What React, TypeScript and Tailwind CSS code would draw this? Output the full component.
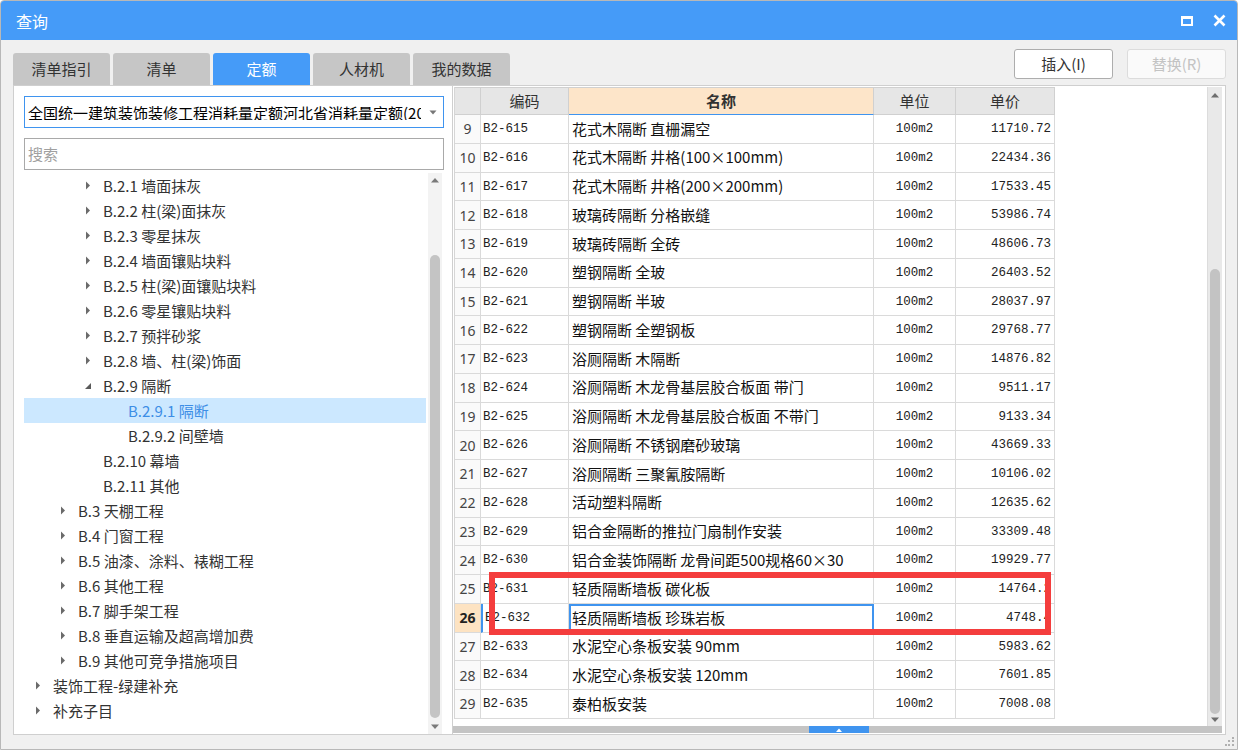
import React from "react";

type TreeItem = { l: 1 | 2 | 3 | 4; t: string; a?: "c" | "e"; sel?: boolean };

const tree: TreeItem[] = [
  { l: 3, t: "B.2.1 墙面抹灰", a: "c" },
  { l: 3, t: "B.2.2 柱(梁)面抹灰", a: "c" },
  { l: 3, t: "B.2.3 零星抹灰", a: "c" },
  { l: 3, t: "B.2.4 墙面镶贴块料", a: "c" },
  { l: 3, t: "B.2.5 柱(梁)面镶贴块料", a: "c" },
  { l: 3, t: "B.2.6 零星镶贴块料", a: "c" },
  { l: 3, t: "B.2.7 预拌砂浆", a: "c" },
  { l: 3, t: "B.2.8 墙、柱(梁)饰面", a: "c" },
  { l: 3, t: "B.2.9 隔断", a: "e" },
  { l: 4, t: "B.2.9.1 隔断", sel: true },
  { l: 4, t: "B.2.9.2 间壁墙" },
  { l: 3, t: "B.2.10 幕墙" },
  { l: 3, t: "B.2.11 其他" },
  { l: 2, t: "B.3 天棚工程", a: "c" },
  { l: 2, t: "B.4 门窗工程", a: "c" },
  { l: 2, t: "B.5 油漆、涂料、裱糊工程", a: "c" },
  { l: 2, t: "B.6 其他工程", a: "c" },
  { l: 2, t: "B.7 脚手架工程", a: "c" },
  { l: 2, t: "B.8 垂直运输及超高增加费", a: "c" },
  { l: 2, t: "B.9 其他可竞争措施项目", a: "c" },
  { l: 1, t: "装饰工程-绿建补充", a: "c" },
  { l: 1, t: "补充子目", a: "c" },
];

const pad: Record<number, string> = {
  1: "pl-[11px]",
  2: "pl-[36px]",
  3: "pl-[61px]",
  4: "pl-[86px]",
};

const rows: [number, string, string, string][] = [
  [9, "B2-615", "花式木隔断 直栅漏空", "11710.72"],
  [10, "B2-616", "花式木隔断 井格(100×100mm)", "22434.36"],
  [11, "B2-617", "花式木隔断 井格(200×200mm)", "17533.45"],
  [12, "B2-618", "玻璃砖隔断 分格嵌缝", "53986.74"],
  [13, "B2-619", "玻璃砖隔断 全砖", "48606.73"],
  [14, "B2-620", "塑钢隔断 全玻", "26403.52"],
  [15, "B2-621", "塑钢隔断 半玻", "28037.97"],
  [16, "B2-622", "塑钢隔断 全塑钢板", "29768.77"],
  [17, "B2-623", "浴厕隔断 木隔断", "14876.82"],
  [18, "B2-624", "浴厕隔断 木龙骨基层胶合板面 带门", "9511.17"],
  [19, "B2-625", "浴厕隔断 木龙骨基层胶合板面 不带门", "9133.34"],
  [20, "B2-626", "浴厕隔断 不锈钢磨砂玻璃", "43669.33"],
  [21, "B2-627", "浴厕隔断 三聚氰胺隔断", "10106.02"],
  [22, "B2-628", "活动塑料隔断", "12635.62"],
  [23, "B2-629", "铝合金隔断的推拉门扇制作安装", "33309.48"],
  [24, "B2-630", "铝合金装饰隔断 龙骨间距500规格60×30", "19929.77"],
  [25, "B2-631", "轻质隔断墙板 碳化板", "14764.2"],
  [26, "B2-632", "轻质隔断墙板 珍珠岩板", "4748.4"],
  [27, "B2-633", "水泥空心条板安装 90mm", "5983.62"],
  [28, "B2-634", "水泥空心条板安装 120mm", "7601.85"],
  [29, "B2-635", "泰柏板安装", "7008.08"],
];

function Caret({ kind }: { kind?: "c" | "e" }) {
  if (kind === "c")
    return (
      <svg width="6" height="9" viewBox="0 0 6 9" className="block">
        <path d="M1 0.5 L5 4.5 L1 8.5 Z" fill="#6a6a6a" />
      </svg>
    );
  if (kind === "e")
    return (
      <svg width="8" height="8" viewBox="0 0 8 8" className="block -ml-[1px]">
        <path d="M7 1 L7 7 L1 7 Z" fill="#5a5a5a" />
      </svg>
    );
  return null;
}

function TriUp({ color = "#6a6a6a" }: { color?: string }) {
  return (
    <svg width="10" height="6" viewBox="0 0 10 6" className="block">
      <path d="M1 5.5 L5 1 L9 5.5 Z" fill={color} />
    </svg>
  );
}
function TriDown({ color = "#6a6a6a" }: { color?: string }) {
  return (
    <svg width="10" height="6" viewBox="0 0 10 6" className="block">
      <path d="M1 0.5 L9 0.5 L5 5 Z" fill={color} />
    </svg>
  );
}

export default function App() {
  const tabs = ["清单指引", "清单", "定额", "人材机", "我的数据"];
  return (
    <div className="relative w-[1238px] h-[750px] bg-[#f0f0f0] border border-[#b8b8b8] rounded-t-[4px] flex flex-col overflow-hidden font-['Noto_Sans_CJK_SC',sans-serif] text-[#333]">
      {/* title bar */}
      <div className="h-[39px] bg-[#459bf8] flex items-center justify-between pl-[15px] pr-[11px] text-white shrink-0">
        <span className="text-[16px] leading-none">查询</span>
        <div className="flex items-center gap-[20px]">
          <div className="w-[12px] h-[10px] border-2 border-t-[3px] border-white" />
          <svg width="13" height="13" viewBox="0 0 13 13">
            <path d="M1.5 1.5 L11.5 11.5 M11.5 1.5 L1.5 11.5" stroke="white" strokeWidth="2.6" />
          </svg>
        </div>
      </div>

      {/* body */}
      <div className="flex-1 flex flex-col pl-[12px] pr-[11px] pt-[13px]">
        {/* tabs + buttons */}
        <div className="h-[32px] flex justify-between shrink-0">
          <div className="flex gap-[3px] items-end">
            {tabs.map((t) => (
              <div
                key={t}
                className={
                  t === "定额"
                    ? "w-[97px] h-[32px] flex items-center justify-center rounded-t-[3px] bg-[#459bf8] text-white text-[15px]"
                    : "w-[97px] h-[32px] flex items-center justify-center rounded-t-[3px] bg-[#c6c6c6] text-[#333] text-[15px]"
                }
              >
                {t}
              </div>
            ))}
          </div>
          <div className="flex gap-[14px] -mt-[4px] items-start">
            <div className="w-[99px] h-[30px] flex items-center justify-center bg-white border border-[#adadad] rounded-[3px] text-[15px] text-[#333]">
              插入(I)
            </div>
            <div className="w-[99px] h-[30px] flex items-center justify-center bg-[#fafafa] border border-[#dcdcdc] rounded-[3px] text-[15px] text-[#c3c3c3]">
              替换(R)
            </div>
          </div>
        </div>

        {/* panels */}
        <div className="h-[650px] flex">
          {/* left panel */}
          <div className="w-[440px] bg-white border border-[#cfcfcf] flex flex-col pl-[10px] pr-[8px] pt-[10px]">
            <div className="h-[32px] border border-[#3f94ef] flex items-center pl-[3px] pr-[6px] shrink-0">
              <div className="flex-1 overflow-hidden whitespace-nowrap text-[15px] text-black leading-none">
                全国统一建筑装饰装修工程消耗量定额河北省消耗量定额(2018)
              </div>
              <div className="ml-[8px]">
                <svg width="8" height="5" viewBox="0 0 8 5" className="block">
                  <path d="M0.5 0.5 L7.5 0.5 L4 4.5 Z" fill="#777" />
                </svg>
              </div>
            </div>
            <div className="mt-[10px] h-[32px] border border-[#a9a9a9] flex items-center pl-[3px] text-[15px] text-[#a0a0a0] shrink-0">
              搜索
            </div>
            <div className="mt-[3px] flex-1 flex min-h-0">
              <div className="w-[402px] flex flex-col">
                {tree.map((it, i) => (
                  <div
                    key={i}
                    className={
                      "h-[25px] flex items-center whitespace-nowrap text-[15px] " +
                      pad[it.l] +
                      (it.sel ? " bg-[#cce8ff] text-[#3d8ee6]" : " text-[#333]")
                    }
                  >
                    <div className="w-[18px] flex items-center">
                      <Caret kind={it.a} />
                    </div>
                    <span className="leading-none">{it.t}</span>
                  </div>
                ))}
              </div>
              <div className="ml-[2px] w-[14px] bg-[#f3f3f3] flex flex-col items-center pt-[4px] pb-[4px]">
                <TriUp color="#7a7a7a" />
                <div className="flex-1 w-full flex flex-col pt-[72px] pb-[6px] px-[2px]">
                  <div className="flex-1 bg-[#c4c4c4] rounded-full" />
                </div>
                <TriDown color="#7a7a7a" />
              </div>
            </div>
          </div>

          {/* right panel */}
          <div className="flex-1 bg-white border border-l-0 border-[#cfcfcf] flex flex-col pt-[1px] pl-[1px] pr-[3px]">
            <div className="flex-1 flex min-h-0">
              {/* table */}
              <div className="w-[601px] flex flex-col border-l border-[#d6d6d6] self-start">
                <div className="h-[28px] flex text-[15px]">
                  <div className="w-[26px] bg-[#e6e6e6] border-r border-b border-t border-[#d0d0d0]" />
                  <div className="w-[88px] bg-[#e6e6e6] border-r border-b border-t border-[#d0d0d0] flex items-center justify-center">编码</div>
                  <div className="w-[305px] bg-[#fde5c9] border-r border-b border-t border-[#d0d0d0] border-b-[#3f94ef] flex items-center justify-center font-bold">名称</div>
                  <div className="w-[82px] bg-[#e6e6e6] border-r border-b border-t border-[#d0d0d0] flex items-center justify-center">单位</div>
                  <div className="w-[99px] bg-[#e6e6e6] border-r border-b border-t border-[#d0d0d0] flex items-center justify-center">单价</div>
                </div>
                {rows.map(([n, code, name, price]) => {
                  const sel = n === 26;
                  return (
                    <div key={n} className="h-[28.75px] flex">
                      <div
                        className={
                          sel
                            ? "w-[26px] bg-[#fde3c2] border-r border-b border-[#dadada] flex items-center justify-center text-[14px] font-bold text-[#222] font-['Noto_Sans',sans-serif]"
                            : "w-[26px] bg-[#fafafa] border-r border-b border-[#dadada] flex items-center justify-center text-[14px] text-[#444] font-['Noto_Sans',sans-serif]"
                        }
                      >
                        {n}
                      </div>
                      <div
                        className={
                          "w-[88px] border-r border-b border-[#dadada] flex items-center pl-[2px] pt-[1px] text-[12.5px] text-[#222] font-['Liberation_Mono',monospace]" +
                          (sel ? " border-l-2 border-l-[#3f94ef] pl-[1px]" : "")
                        }
                      >
                        {code}
                      </div>
                      <div
                        className={
                          sel
                            ? "w-[305px] border-2 border-[#3f94ef] flex items-center pl-[1px] text-[15px] text-[#111] whitespace-nowrap overflow-hidden"
                            : "w-[305px] border-r border-b border-[#dadada] flex items-center pl-[3px] text-[15px] text-[#111] whitespace-nowrap overflow-hidden"
                        }
                      >
                        {name}
                      </div>
                      <div className="w-[82px] border-r border-b border-[#dadada] flex items-center justify-center pt-[1px] text-[12.5px] text-[#222] font-['Liberation_Mono',monospace]">
                        100m2
                      </div>
                      <div className="w-[99px] border-r border-b border-[#dadada] flex items-center justify-end pr-[3px] pt-[1px] text-[12.5px] text-[#222] font-['Liberation_Mono',monospace]">
                        {price}
                      </div>
                    </div>
                  );
                })}
              </div>
              <div className="flex-1" />
              {/* vertical scrollbar */}
              <div className="w-[15px] bg-[#e9e9e9] border-l border-[#dcdcdc] flex flex-col items-center pt-[5px] pb-[3px]">
                <TriUp color="#6e6e6e" />
                <div className="flex-1 w-full flex flex-col pt-[171px] pb-[3px] px-[2px]">
                  <div className="flex-1 bg-[#c3c3c3] rounded-full" />
                </div>
                <TriDown color="#6e6e6e" />
              </div>
            </div>
            {/* horizontal scrollbar */}
            <div className="h-[7px] bg-[#c4c4c4] flex justify-center shrink-0 -ml-[1px]">
              <div className="w-[60px] h-[7px] bg-[#3f94ef] flex items-center justify-center ml-[3px]">
                <svg width="6" height="4" viewBox="0 0 6 4" className="block">
                  <path d="M0 4 L3 0.5 L6 4 Z" fill="white" />
                </svg>
              </div>
            </div>
            <div className="h-[1px] shrink-0" />
          </div>
        </div>
      </div>

      {/* red highlight box */}
      <div className="absolute left-[488px] top-[571px] w-[562px] h-[63px] border-[6px] border-[#f43d3d]" />

      {/* resize grip */}
      <div className="absolute right-[3px] bottom-[3px] w-[9px] h-[9px] grid grid-cols-3 gap-[1px]">
        <span />
        <span />
        <span className="bg-[#b0b0b0] w-[2px] h-[2px]" />
        <span />
        <span className="bg-[#b0b0b0] w-[2px] h-[2px]" />
        <span className="bg-[#b0b0b0] w-[2px] h-[2px]" />
        <span className="bg-[#b0b0b0] w-[2px] h-[2px]" />
        <span className="bg-[#b0b0b0] w-[2px] h-[2px]" />
        <span className="bg-[#b0b0b0] w-[2px] h-[2px]" />
      </div>
    </div>
  );
}
